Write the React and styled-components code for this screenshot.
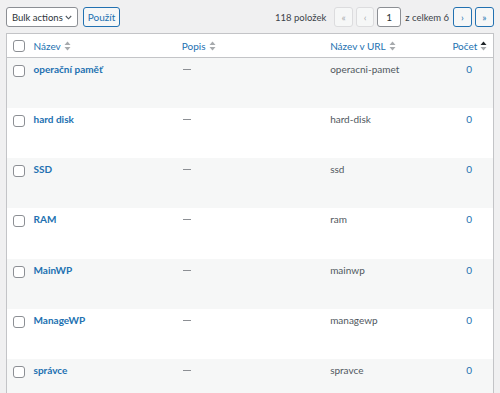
import React from 'react';
import styled, { createGlobalStyle } from 'styled-components';

const GlobalStyle = createGlobalStyle`
  html, body {
    margin: 0;
    background: #f0f0f1;
    font-family: Lato, "Noto Sans", sans-serif;
    color: #3c434a;
  }
`;

const Page = styled.div`
  padding: 7px 6px 0 6px;
`;

const Toolbar = styled.div`
  display: flex;
  align-items: center;
  justify-content: space-between;
  height: 20px;
  margin-bottom: 6px;
`;

const Group = styled.div`
  display: flex;
  align-items: center;
  gap: ${p => p.$gap || 5}px;
`;

const Select = styled.div`
  box-sizing: border-box;
  width: 72px;
  height: 20px;
  border: 1px solid #8c8f94;
  border-radius: 3px;
  background: #fff;
  display: flex;
  align-items: center;
  justify-content: space-between;
  padding: 0 5px 0 5px;
  font-size: 9.5px;
  color: #2c3338;
  white-space: nowrap;

  svg {
    flex-shrink: 0;
  }
`;

const Button = styled.div`
  box-sizing: border-box;
  height: 20px;
  width: ${p => (p.$w ? `${p.$w}px` : 'auto')};
  padding: 0 ${p => p.$pad ?? 6}px;
  border: 1px solid ${p => (p.$disabled ? '#dcdcde' : '#2271b1')};
  border-radius: 3px;
  background: #f6f7f7;
  color: ${p => (p.$disabled ? '#a7aaad' : '#2271b1')};
  display: flex;
  align-items: center;
  justify-content: center;
  font-size: 10px;
`;

const PageInput = styled.div`
  box-sizing: border-box;
  width: 24px;
  height: 20px;
  border: 1px solid #8c8f94;
  border-radius: 3px;
  background: #fff;
  display: flex;
  align-items: center;
  justify-content: center;
  font-size: 10px;
  color: #2c3338;
`;

const Info = styled.span`
  font-size: 9.5px;
  color: #3c434a;
  margin: ${p => p.$m || '0'};
`;

const Table = styled.table`
  width: 100%;
  border-collapse: collapse;
  table-layout: fixed;
  background: #fff;
  border: 1px solid #c3c4c7;
  font-size: 10px;
`;

const HeadCell = styled.th`
  text-align: ${p => (p.$center ? 'center' : 'left')};
  font-weight: 400;
  height: 23px;
  padding: 0 7px;
  border-bottom: 1px solid #c3c4c7;
  color: #2271b1;
  white-space: nowrap;
  font-size: 10px;
`;

const Row = styled.tr`
  background: ${p => (p.$alt ? '#f6f7f7' : '#fff')};
  height: 50.3px;
`;

const Cell = styled.td`
  vertical-align: top;
  padding: 3px 7px 0 7px;
  text-align: ${p => (p.$center ? 'center' : 'left')};
  color: ${p => p.$color || '#50575e'};
  font-weight: ${p => (p.$bold ? 700 : 400)};
  line-height: 16px;
  white-space: nowrap;
`;

const Dash = styled.span`
  display: inline-block;
  width: 8px;
  height: 1px;
  background: #8c8f94;
  vertical-align: 3px;
  margin-left: 1px;
`;

const CheckCell = styled.td`
  vertical-align: top;
  padding: 7px 0 0 6px;
`;

const CheckHead = styled.th`
  padding: 0 0 0 6px;
  height: 23px;
  border-bottom: 1px solid #c3c4c7;
  text-align: left;
`;

const Checkbox = styled.span`
  display: block;
  box-sizing: border-box;
  width: 12px;
  height: 12px;
  border: 1px solid #8c8f94;
  border-radius: 3px;
  background: #fff;
`;

const SortIcon = ({ active }) => (
  <svg width="7" height="10" viewBox="0 0 7 10" style={{ marginLeft: 3, verticalAlign: -1 }}>
    <path d="M3.5 0.5 L6.5 4 H0.5 Z" fill={active ? '#1d2327' : '#a7aaad'} />
    <path d="M3.5 9.5 L6.5 6 H0.5 Z" fill="#a7aaad" />
  </svg>
);

const Chevron = () => (
  <svg width="7" height="5" viewBox="0 0 7 5">
    <path d="M0.8 1 L3.5 3.8 L6.2 1" stroke="#50575e" strokeWidth="1.1" fill="none" />
  </svg>
);

const rows = [
  ['operační paměť', 'operacni-pamet'],
  ['hard disk', 'hard-disk'],
  ['SSD', 'ssd'],
  ['RAM', 'ram'],
  ['MainWP', 'mainwp'],
  ['ManageWP', 'managewp'],
  ['správce', 'spravce'],
];

export default function App() {
  return (
    <Page>
      <GlobalStyle />
      <Toolbar>
        <Group>
          <Select>
            <span>Bulk actions</span>
            <Chevron />
          </Select>
          <Button $w={37} $pad={0}>Použít</Button>
        </Group>
        <Group $gap={3}>
          <Info $m="0 5px 0 0">118 položek</Info>
          <Button $disabled $w={19} $pad={0}>«</Button>
          <Button $disabled $w={18} $pad={0}>‹</Button>
          <PageInput>1</PageInput>
          <Info $m="0 1px">z celkem 6</Info>
          <Button $w={19} $pad={0}>›</Button>
          <Button $w={19} $pad={0}>»</Button>
        </Group>
      </Toolbar>
      <Table>
        <colgroup>
          <col style={{ width: 20 }} />
          <col style={{ width: 148 }} />
          <col style={{ width: 148 }} />
          <col style={{ width: 122 }} />
          <col style={{ width: 48 }} />
        </colgroup>
        <thead>
          <tr>
            <CheckHead><Checkbox /></CheckHead>
            <HeadCell>Název<SortIcon /></HeadCell>
            <HeadCell>Popis<SortIcon /></HeadCell>
            <HeadCell>Název v URL<SortIcon /></HeadCell>
            <HeadCell $center>Počet<SortIcon active /></HeadCell>
          </tr>
        </thead>
        <tbody>
          {rows.map(([name, slug], i) => (
            <Row key={slug} $alt={i % 2 === 0}>
              <CheckCell><Checkbox /></CheckCell>
              <Cell $bold $color="#2271b1">{name}</Cell>
              <Cell><Dash /></Cell>
              <Cell>{slug}</Cell>
              <Cell $center $color="#2271b1">0</Cell>
            </Row>
          ))}
        </tbody>
      </Table>
    </Page>
  );
}
